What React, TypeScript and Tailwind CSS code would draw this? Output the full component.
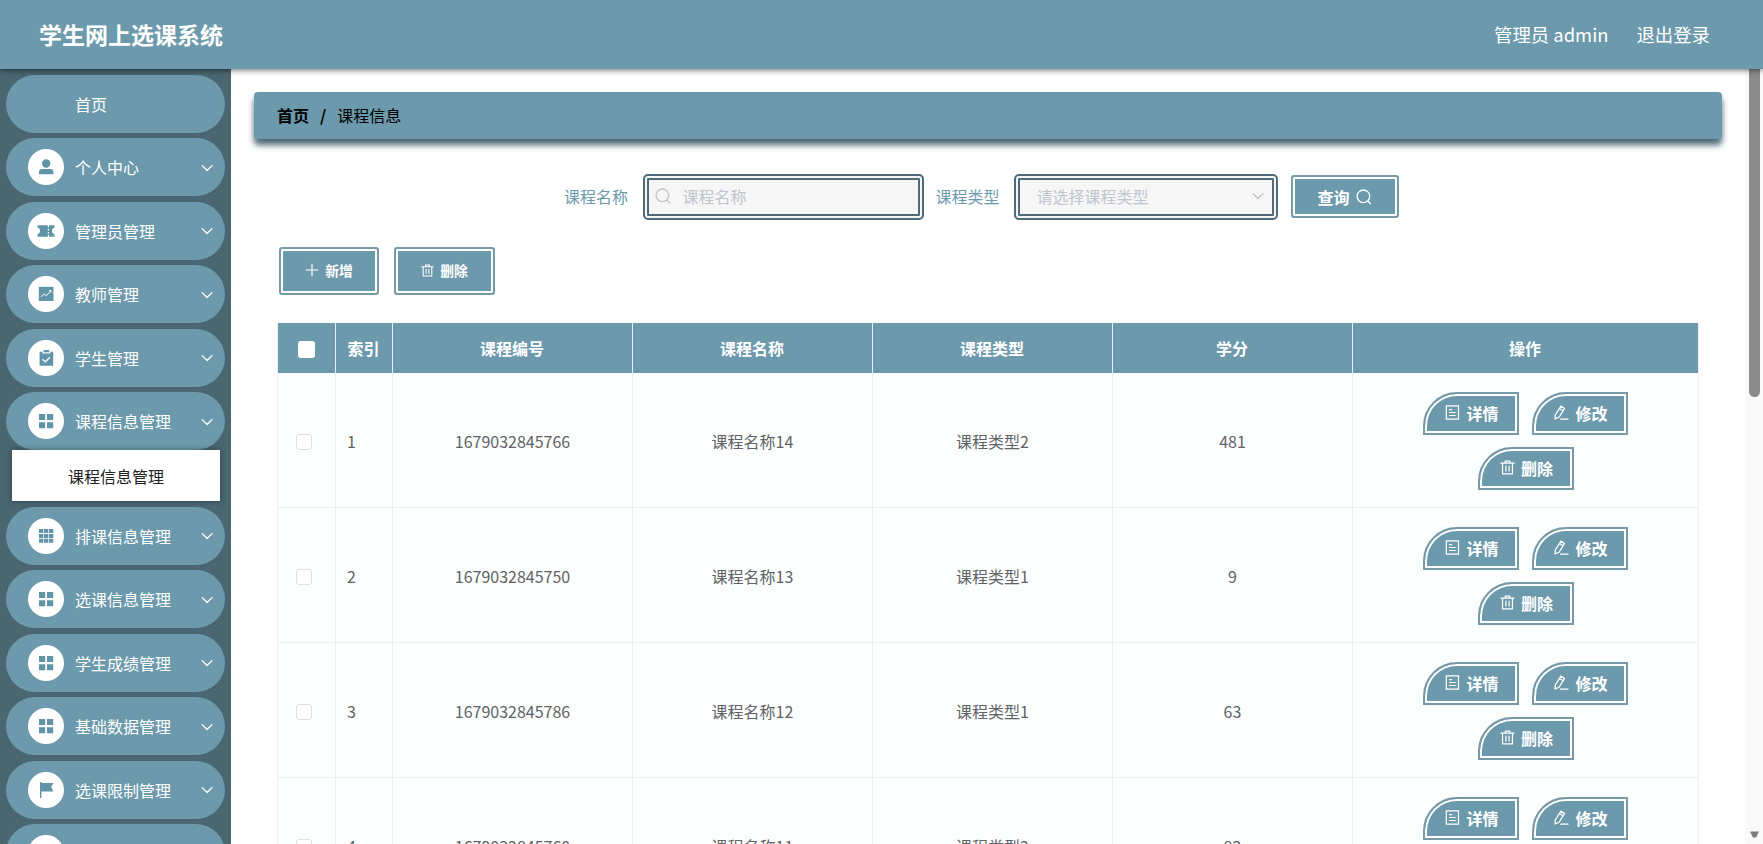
import React from "react";

type MenuItem = { title: string; icon?: string; child?: string };

const menus: MenuItem[] = [
    { title: "首页" },
    { title: "个人中心", icon: "user" },
    { title: "管理员管理", icon: "ticket" },
    { title: "教师管理", icon: "chart" },
    { title: "学生管理", icon: "claim" },
    { title: "课程信息管理", icon: "menu", child: "课程信息管理" },
    { title: "排课信息管理", icon: "grid" },
    { title: "选课信息管理", icon: "menu" },
    { title: "学生成绩管理", icon: "menu" },
    { title: "基础数据管理", icon: "menu" },
    { title: "选课限制管理", icon: "flag" },
    { title: "", icon: "menu" },
];

const rows = [
    { id: 1, no: "1679032845766", name: "课程名称14", type: "课程类型2", score: "481" },
    { id: 2, no: "1679032845750", name: "课程名称13", type: "课程类型1", score: "9" },
    { id: 3, no: "1679032845786", name: "课程名称12", type: "课程类型1", score: "63" },
    { id: 4, no: "1679032845760", name: "课程名称11", type: "课程类型2", score: "82" },
];

const columns = "grid grid-cols-[58px_57px_240px_240px_240px_240px_346px]";

function MenuIcon({ name }: { name?: string }) {
    return (
        <svg viewBox="0 0 18 18" className="h-[18px] w-[18px] fill-[#6294a8]">
            {name === "user" && (
                <>
                    <circle cx="9.2" cy="5.5" r="4.2" />
                    <path d="M2 16.3v-2.2a3.2 3.2 0 0 1 3.2-3.2h8a3.2 3.2 0 0 1 3.2 3.2v2.2z" />
                </>
            )}
            {name === "ticket" && (
                <path d="M.5 3.2h10.3v2h1.2v-2h5.5v2.4a3.4 3.4 0 0 0 0 6.6v2.6H12v-2h-1.2v2H.5v-2.6a3.4 3.4 0 0 0 0-6.6zM10.8 6.8v1.6H12V6.8zm0 3.2v1.6H12V10z" />
            )}
            {name === "chart" && (
                <>
                    <path d="M1.8 1.8h14.7v14.2H1.8z" />
                    <path d="M4.2 11.8l3-3 2 2 4.3-4.6" className="fill-none stroke-white" />
                    <path d="M12 5.6h2V7.6" className="fill-none stroke-white" />
                </>
            )}
            {name === "claim" && (
                <>
                    <path d="M2.6 2.8h2.8v1.6h8V2.8h2.8v14H2.6z" />
                    <path d="M6.6 1h5.6v2.3H6.6z" />
                    <path d="M5.5 10.2l2.8 2.7 4.6-4.6" className="fill-none stroke-white [stroke-width:1.3]" />
                </>
            )}
            {name === "menu" && (
                <path d="M2 2h6.2v6H2zM10 2h6.2v6H10zM2 10.3h6.2v6H2zM10 10.3h6.2v6H10z" />
            )}
            {name === "grid" && (
                <path d="M2 2h4.3v4H2zm5 0h4.3v4H7zm5 0h4.3v4H12zM2 6.9h4.3v4H2zm5 0h4.3v4H7zm5 0h4.3v4H12zM2 11.8h4.3v4H2zm5 0h4.3v4H7zm5 0h4.3v4H12z" />
            )}
            {name === "flag" && <path d="M3 1h1.4v1h12L14.2 6l2.2 4.6h-12V17H3z" />}
        </svg>
    );
}

function ArrowDown({ className }: { className: string }) {
    return (
        <svg viewBox="0 0 12 8" className={className} fill="none" stroke="currentColor" strokeWidth="1.3" strokeLinecap="round" strokeLinejoin="round">
            <path d="M1.2 1.6l4.9 4.9L11 1.6" />
        </svg>
    );
}

function Icon({ name, className }: { name: string; className: string }) {
    return (
        <svg viewBox="0 0 16 16" className={className} fill="none" stroke="currentColor" strokeWidth="1.3" strokeLinecap="round">
            {name === "search" && (
                <>
                    <circle cx="7.4" cy="7.3" r="6.3" />
                    <path d="M12 12.3l2.5 2.5" />
                </>
            )}
            {name === "plus" && <path d="M8 1.5v13M1.5 8h13" />}
            {name === "delete" && (
                <path d="M1 3.4h14M2.7 3.6v11.2h10.6V3.6M5.6 3.2V1.2h4.8v2M6.3 6.5v5.3M9.7 6.5v5.3" />
            )}
            {name === "detail" && <path d="M1.4.9h13v14.2h-13zM4.8 5h2.4M4.8 8h6.2M4.8 11.2h6.2" />}
            {name === "edit" && (
                <path d="M7.4 1.2l3.8 2.4-5.8 9.6-4.3 1.6.3-4.2zM5.9 3.8l3.7 2.3M7 15h8" />
            )}
        </svg>
    );
}

function Sidebar() {
    return (
        <div className="h-full w-[231px] shrink-0 overflow-hidden bg-[#4a6771] pt-[6px]">
            {menus.map((m, i) => (
                <div key={i} className="mb-[5.8px]">
                    <div className="mx-[6px] flex h-[57.7px] items-center rounded-full bg-[#6c9aac] pr-[12px] pl-[22px] text-white">
                        <span className={"mr-[11px] flex h-9 w-9 items-center justify-center rounded-full " + (m.icon ? "bg-white" : "")}>
                            {m.icon && <MenuIcon name={m.icon} />}
                        </span>
                        <span className="grow">{m.title}</span>
                        {m.icon && <ArrowDown className="mt-px h-2 w-3" />}
                    </div>
                    {m.child && (
                        <div className="mr-[11px] ml-3 flex h-[51px] items-center justify-center bg-white text-[#222] shadow-[0_0_6px_rgba(0,0,0,0.4)]">
                            {m.child}
                        </div>
                    )}
                </div>
            ))}
        </div>
    );
}

// white line sits inside the outer border
const btn = "flex items-center border-2 border-[#7899a6] bg-[#6c9aac] text-white shadow-[inset_0_0_0_2px_#fff]";

function RowButton({ icon, text }: { icon: string; text: string }) {
    return (
        <div className={btn + " h-[43px] w-[96px] justify-center gap-[6px] rounded-tl-[34px] pb-[2px] pl-[2px] font-bold"}>
            <Icon name={icon} className="h-[15px] w-[15px]" />
            {text}
        </div>
    );
}

function Search() {
    return (
        <div className="mt-[34px] flex h-[47px] items-center pl-[310px] text-[#6c9aac]">
            <span className="w-[78.5px] pb-px">课程名称</span>
            <div className="flex h-[46px] w-[281px] items-center rounded-[5px] border-[6px] border-double border-[#4f6b75] bg-[#f6f6f6] pb-[2px] pl-[6px] text-[#c0c4cc]">
                <Icon name="search" className="mr-[12px] h-4 w-4" />
                课程名称
            </div>
            <span className="ml-[12px] w-[78px] pb-px">课程类型</span>
            <div className="flex h-[46px] w-[264px] items-center justify-between rounded-[5px] border-[6px] border-double border-[#4f6b75] bg-[#f6f6f6] pr-[8px] pb-[2px] pl-[17px] text-[#c0c4cc]">
                请选择课程类型
                <ArrowDown className="h-2 w-3" />
            </div>
            <div className={btn + " ml-[13px] h-[43px] w-[108px] justify-center gap-[6px] rounded-[3px] font-bold"}>
                查询
                <Icon name="search" className="h-4 w-4" />
            </div>
        </div>
    );
}

function Table() {
    const cell = "flex items-center justify-center border-r border-[#ebeef5]";
    return (
        <div className="mt-[28px] ml-[23px] w-[1422px] border-l border-[#ebeef5]">
            <div className={columns + " h-[50px] bg-[#6c9aac] font-bold text-white"}>
                <div className={cell + " pt-[3px]"}>
                    <span className="h-[17px] w-[17px] rounded-[3px] bg-white"></span>
                </div>
                {["索引", "课程编号", "课程名称", "课程类型", "学分", "操作"].map((t) => (
                    <div key={t} className={cell + " pr-px"}>{t}</div>
                ))}
            </div>
            {rows.map((r) => (
                <div key={r.id} className={columns + " h-[135px] border-b border-[#ebeef5] bg-[#fcfefe] text-[#606266]"}>
                    <div className={cell + " pt-[4px] pr-[5px]"}>
                        <span className="h-4 w-4 rounded-[3px] border border-[#dcdfe6] bg-white"></span>
                    </div>
                    <div className={cell + " justify-start! pt-[2px] pl-[11px]"}>{r.id}</div>
                    <div className={cell + " pt-[2px]"}>{r.no}</div>
                    <div className={cell + " pt-[2px]"}>{r.name}</div>
                    <div className={cell + " pt-[2px]"}>{r.type}</div>
                    <div className={cell + " pt-[2px]"}>{r.score}</div>
                    <div className={cell + " flex-wrap content-center gap-x-[13px] gap-y-[12px] px-[60px] pt-[2px]"}>
                        <RowButton icon="detail" text="详情" />
                        <RowButton icon="edit" text="修改" />
                        <RowButton icon="delete" text="删除" />
                    </div>
                </div>
            ))}
        </div>
    );
}

export default function App() {
    return (
        <div className="flex h-[844px] w-[1763px] flex-col overflow-hidden bg-white font-['Noto_Sans_CJK_SC',sans-serif] text-[16px] leading-6">
            <div className="z-10 flex h-[69px] shrink-0 items-center bg-[#6c9aac] pr-[53px] pb-px pl-[39px] text-white shadow-[0_1px_6px_rgba(0,0,0,0.6)]">
                <div className="grow text-[23px] font-bold">学生网上选课系统</div>
                <div className="mr-7 text-[18.4px]">管理员 admin</div>
                <div className="text-[18.4px]">退出登录</div>
            </div>
            <div className="flex h-[775px]">
                <Sidebar />
                <div className="h-full w-[1514px] overflow-hidden pt-[23px] pl-[23px]">
                    <div className="flex h-[47px] w-[1468px] items-center rounded-[4px] bg-[#6c9aac] pb-[2px] pl-[23px] text-black shadow-[0_6px_6px_#4a6771]">
                        <span className="font-bold">首页</span>
                        <span className="mx-[11px] font-bold">/</span>
                        <span>课程信息</span>
                    </div>
                    <Search />
                    <div className="mt-[27px] ml-[25px] flex gap-[15px] text-[13.8px] font-bold">
                        <div className={btn + " h-[48px] w-[100px] justify-center gap-[6px] rounded-[3px] pb-[2px]"}>
                            <Icon name="plus" className="h-[14px] w-[14px]" />
                            新增
                        </div>
                        <div className={btn + " h-[48px] w-[101px] justify-center gap-[6px] rounded-[3px] pb-[2px]"}>
                            <Icon name="delete" className="h-[13px] w-[13px]" />
                            删除
                        </div>
                    </div>
                    <Table />
                </div>
                <div className="flex h-full w-[18px] flex-col items-center justify-between bg-[#fafafa] pb-[6px]">
                    <div className="h-[328px] w-[11px] rounded-b-full bg-[#8b8b8b]"></div>
                    <svg viewBox="0 0 9 7" className="h-[7px] w-[9px] fill-[#7d7d7d]">
                        <path d="M0 .5h9L6 6.5H3z" />
                    </svg>
                </div>
            </div>
        </div>
    );
}
